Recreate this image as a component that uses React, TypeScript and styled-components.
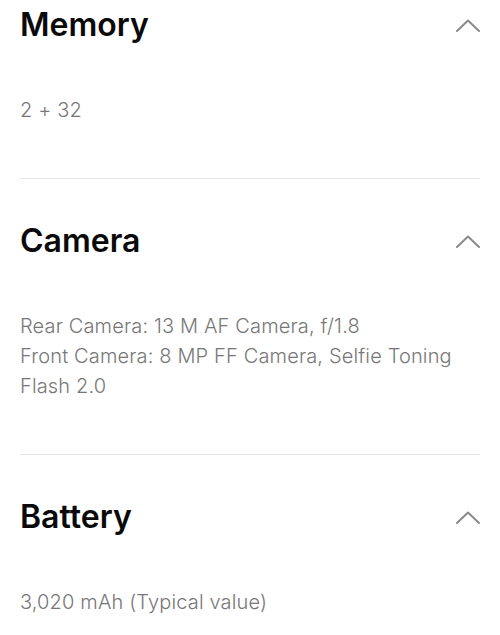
import React from "react";
import styled, { createGlobalStyle } from "styled-components";

const Global = createGlobalStyle`
  html, body { margin: 0; padding: 0; background: #fff; }
  body { font-family: Inter, "Noto Sans", sans-serif; -webkit-font-smoothing: antialiased; }
`;

const Page = styled.div`
  padding: 5px 20px 0;
  display: flex;
  flex-direction: column;
`;

const Section = styled.section<{ $first?: boolean }>`
  display: flex;
  flex-direction: column;
  padding-top: ${(p) => (p.$first ? "0" : "42px")};
  padding-bottom: 53px;
  border-bottom: 1px solid #e6e6e6;
`;

const Header = styled.div`
  display: flex;
  align-items: center;
  justify-content: space-between;
  height: 40px;
`;

const Title = styled.h2`
  margin: 0;
  font-size: 32px;
  line-height: 40px;
  font-weight: 600;
  color: #0a0a0a;
  letter-spacing: 0;
`;

const Body = styled.div`
  margin-top: 50px;
  font-size: 20px;
  line-height: 30px;
  color: #777;
  font-weight: 300;
  letter-spacing: 0.15px;
`;

const Chevron = () => (
  <svg width="24" height="13" viewBox="0 0 24 13" fill="none">
    <path d="M1 12 L12 1.5 L23 12" stroke="#8a8a8a" strokeWidth="2" strokeLinecap="round" strokeLinejoin="round" />
  </svg>
);

const data = [
  { title: "Memory", lines: ["2 + 32"] },
  {
    title: "Camera",
    lines: [
      "Rear Camera: 13 M AF Camera, f/1.8",
      "Front Camera: 8 MP FF Camera, Selfie Toning",
      "Flash 2.0",
    ],
  },
  { title: "Battery", lines: ["3,020 mAh (Typical value)"] },
];

export default function App() {
  return (
    <>
      <Global />
      <Page>
        {data.map((s, i) => (
          <Section key={s.title} $first={i === 0}>
            <Header>
              <Title>{s.title}</Title>
              <Chevron />
            </Header>
            <Body>
              {s.lines.map((l) => (
                <div key={l}>{l}</div>
              ))}
            </Body>
          </Section>
        ))}
      </Page>
    </>
  );
}
